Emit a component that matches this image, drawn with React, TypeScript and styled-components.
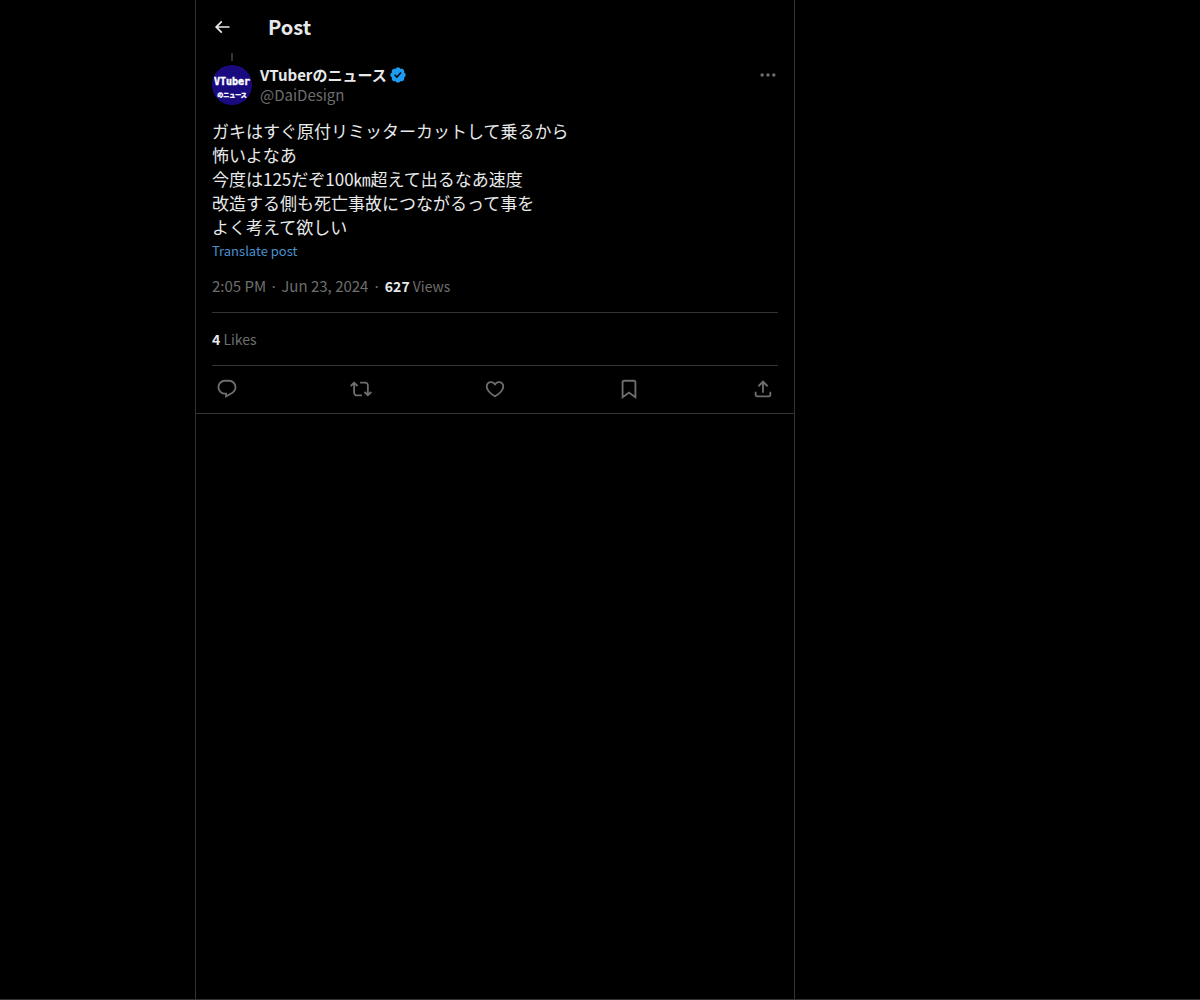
import React from "react";
import styled, { createGlobalStyle } from "styled-components";

const color = {
  text: "#e7e9ea",
  grey: "#6e6e6e",
  rule: "#333333",
  link: "#4a90d0",
  badge: "#1d9bf0",
};

const GlobalStyle = createGlobalStyle`
  *, *::before, *::after { box-sizing: border-box; }
  body {
    margin: 0;
    background: #000;
    color: ${color.text};
    font-family: "Noto Sans CJK JP", "Noto Sans", sans-serif;
    font-size: 15px;
    line-height: 20px;
  }
`;

const Page = styled.div`
  display: grid;
  grid-template-columns: minmax(0, 195px) minmax(0, 600px) 1fr;
  min-height: 100vh;
  border-bottom: 1px solid ${color.rule};
`;

const Column = styled.main`
  grid-column: 2;
  border: solid ${color.rule};
  border-width: 0 1px;
`;

const Header = styled.header`
  display: flex;
  align-items: center;
  gap: 36px;
  height: 53px;
  padding: 0 16px;
`;

const Title = styled.h1`
  margin: 0;
  font-size: 20px;
  line-height: 24px;
  font-weight: 700;
`;

const IconButton = styled.button<{ $tone?: string }>`
  display: flex;
  padding: 0;
  border: 0;
  background: none;
  color: ${(p) => p.$tone ?? color.grey};
  cursor: pointer;
`;

const Glyph = styled.svg<{ $size: number }>`
  display: block;
  flex: none;
  width: ${(p) => p.$size}px;
  height: ${(p) => p.$size}px;
  fill: currentColor;
`;

const Post = styled.article`
  border-bottom: 1px solid ${color.rule};
`;

const Inset = styled.div`
  padding: 0 16px;
`;

const ThreadLine = styled.div`
  width: 2px;
  height: 8px;
  margin: 0 19px 4px;
  background: ${color.rule};
`;

const Author = styled.div`
  display: flex;
  gap: 8px;
  margin-bottom: 14px;
`;

const AuthorNames = styled.div`
  flex: 1;
  min-width: 0;
`;

const NameRow = styled.div`
  display: flex;
  align-items: center;
  gap: 2px;
`;

const Name = styled.a`
  color: ${color.text};
  font-weight: 700;
  text-decoration: none;
`;

const Handle = styled.a`
  display: block;
  color: ${color.grey};
  text-decoration: none;
`;

const MoreWrap = styled.div`
  display: flex;
  align-items: center;
  height: 20px;
`;

const Avatar = styled.svg`
  display: block;
  width: 40px;
  height: 40px;
  border-radius: 50%;
`;

const Body = styled.p`
  margin: 0;
  font-size: 17px;
  line-height: 24px;
  white-space: pre-line;
`;

const Translate = styled.button`
  display: block;
  padding: 0;
  border: 0;
  background: none;
  color: ${color.link};
  font: inherit;
  font-size: 13px;
  line-height: 24px;
  cursor: pointer;
`;

const Meta = styled.div`
  display: flex;
  gap: 4px;
  padding: 13px 0 16px;
  color: ${color.grey};
`;

const Likes = styled.div`
  padding: 16px 0;
  border: solid ${color.rule};
  border-width: 1px 0;
`;

const Stat = styled.span`
  display: block;
  color: ${color.grey};
  font-size: 14px;
`;

const Count = styled.strong`
  color: ${color.text};
  font-weight: 700;
`;

const Actions = styled.div`
  display: flex;
  align-items: center;
  justify-content: space-between;
  height: 47px;
  padding: 0 4px 1px;
`;

const BACK = "M7.414 13l5.043 5.04-1.414 1.42L3.586 12l7.457-7.46 1.414 1.42L7.414 11H21v2H7.414z";
const MORE =
  "M3 12c0-1.1.9-2 2-2s2 .9 2 2-.9 2-2 2-2-.9-2-2zm9 2c1.1 0 2-.9 2-2s-.9-2-2-2-2 .9-2 2 .9 2 2 2zm7 0c1.1 0 2-.9 2-2s-.9-2-2-2-2 .9-2 2 .9 2 2 2z";
const BADGE =
  "M20.396 11c-.018-.646-.215-1.275-.57-1.816-.354-.54-.852-.972-1.438-1.246.223-.607.27-1.264.14-1.897-.131-.634-.437-1.218-.882-1.687-.47-.445-1.053-.75-1.687-.882-.633-.13-1.29-.083-1.897.14-.273-.587-.704-1.086-1.245-1.44S11.647 1.62 11 1.604c-.646.017-1.273.213-1.813.568s-.969.854-1.24 1.44c-.608-.223-1.267-.272-1.902-.14-.635.13-1.22.436-1.69.882-.445.47-.749 1.055-.878 1.688-.13.633-.08 1.29.144 1.896-.587.274-1.087.705-1.443 1.245-.356.54-.555 1.17-.574 1.817.02.647.218 1.276.574 1.817.356.54.856.972 1.443 1.245-.224.606-.274 1.263-.144 1.896.13.634.433 1.218.877 1.688.47.443 1.054.747 1.687.878.633.132 1.29.084 1.897-.136.274.586.705 1.084 1.246 1.439.54.354 1.17.551 1.816.569.647-.016 1.276-.213 1.817-.567s.972-.854 1.245-1.44c.604.239 1.266.296 1.903.164.636-.132 1.22-.447 1.68-.907.46-.46.776-1.044.908-1.681s.075-1.299-.165-1.903c.586-.274 1.084-.705 1.439-1.246.354-.54.551-1.17.569-1.816zM9.662 14.85l-3.429-3.428 1.293-1.302 2.072 2.072 4.4-4.794 1.347 1.246z";

const actions = [
  {
    label: "Reply",
    d: "M1.751 10c0-4.42 3.584-8 8.005-8h4.366c4.49 0 8.129 3.64 8.129 8.13 0 2.96-1.607 5.68-4.196 7.11l-8.054 4.46v-3.69h-.067c-4.49.1-8.183-3.51-8.183-8.01zm8.005-6c-3.317 0-6.005 2.69-6.005 6 0 3.37 2.77 6.08 6.138 6.01l.351-.01h1.761v2.3l5.087-2.81c1.951-1.08 3.163-3.13 3.163-5.36 0-3.39-2.744-6.13-6.129-6.13H9.756z",
  },
  {
    label: "Repost",
    d: "M4.5 3.88l4.432 4.14-1.364 1.46L5.5 7.55V16c0 1.1.896 2 2 2H13v2H7.5c-2.209 0-4-1.79-4-4V7.55L1.432 9.48.068 8.02 4.5 3.88zM16.5 6H11V4h5.5c2.209 0 4 1.79 4 4v8.45l2.068-1.93 1.364 1.46-4.432 4.14-4.432-4.14 1.364-1.46 2.068 1.93V8c0-1.1-.896-2-2-2z",
  },
  {
    label: "Like",
    d: "M16.697 5.5c-1.222-.06-2.679.51-3.89 2.16l-.805 1.09-.806-1.09C9.984 6.01 8.526 5.44 7.304 5.5c-1.243.07-2.349.78-2.91 1.91-.552 1.12-.633 2.78.479 4.82 1.074 1.97 3.257 4.27 7.129 6.61 3.87-2.34 6.052-4.64 7.126-6.61 1.111-2.04 1.03-3.7.477-4.82-.561-1.13-1.666-1.84-2.908-1.91zm4.187 7.69c-1.351 2.48-4.001 5.12-8.379 7.67l-.503.3-.504-.3c-4.379-2.55-7.029-5.19-8.382-7.67-1.36-2.5-1.41-4.86-.514-6.67.887-1.79 2.647-2.91 4.601-3.01 1.651-.09 3.368.56 4.798 2.01 1.429-1.45 3.146-2.1 4.796-2.01 1.954.1 3.714 1.22 4.601 3.01.896 1.81.846 4.17-.514 6.67z",
  },
  {
    label: "Bookmark",
    d: "M4 4.5C4 3.12 5.119 2 6.5 2h11C18.881 2 20 3.12 20 4.5v18.44l-8-5.71-8 5.71V4.5zM6.5 4c-.276 0-.5.22-.5.5v14.56l6-4.29 6 4.29V4.5c0-.28-.224-.5-.5-.5h-11z",
  },
  {
    label: "Share",
    d: "M12 2.59l5.7 5.7-1.41 1.42L13 6.41V16h-2V6.41l-3.3 3.3-1.41-1.42L12 2.59zM21 15l-.02 3.51c0 1.38-1.12 2.49-2.5 2.49H5.5C4.11 21 3 19.88 3 18.5V15h2v3.5c0 .28.22.5.5.5h12.98c.28 0 .5-.22.5-.5L19 15h2z",
  },
];

const postText = `ガキはすぐ原付リミッターカットして乗るから
怖いよなあ
今度は125だぞ100㎞超えて出るなあ速度
改造する側も死亡事故につながるって事を
よく考えて欲しい`;

function Icon({ d, size, box = 24 }: { d: string; size: number; box?: number }) {
  return (
    <Glyph $size={size} viewBox={`0 0 ${box} ${box}`} aria-hidden="true">
      <path d={d} />
    </Glyph>
  );
}

function ProfilePicture() {
  return (
    <Avatar viewBox="0 0 40 40" role="img" aria-label="VTuberのニュース">
      <rect width="40" height="40" fill="#1a0a80" />
      <g fill="#fff" stroke="#fff" strokeWidth="0.4" textAnchor="middle" fontWeight="700">
        <text x="20" y="20" fontSize="10" fontFamily="'DejaVu Sans Mono', monospace">
          VTuber
        </text>
        <text x="20" y="32" fontSize="6" fontFamily="'Noto Sans CJK JP', sans-serif">
          のニュース
        </text>
      </g>
    </Avatar>
  );
}

export default function App() {
  return (
    <>
      <GlobalStyle />
      <Page>
        <Column>
          <Header>
            <IconButton $tone={color.text} aria-label="Back">
              <Icon d={BACK} size={20} />
            </IconButton>
            <Title>Post</Title>
          </Header>
          <Post>
            <Inset>
              <ThreadLine />
              <Author>
                <ProfilePicture />
                <AuthorNames>
                  <NameRow>
                    <Name href="#profile">VTuberのニュース</Name>
                    <IconButton $tone={color.badge} aria-label="Verified account">
                      <Icon d={BADGE} size={18} box={22} />
                    </IconButton>
                  </NameRow>
                  <Handle href="#profile">@DaiDesign</Handle>
                </AuthorNames>
                <MoreWrap>
                  <IconButton aria-label="More">
                    <Icon d={MORE} size={20} />
                  </IconButton>
                </MoreWrap>
              </Author>
              <Body lang="ja">{postText}</Body>
              <Translate>Translate post</Translate>
              <Meta>
                <time dateTime="2024-06-23T14:05">2:05 PM · Jun 23, 2024</time>
                <span>·</span>
                <Stat>
                  <Count>627</Count> Views
                </Stat>
              </Meta>
              <Likes>
                <Stat>
                  <Count>4</Count> Likes
                </Stat>
              </Likes>
              <Actions>
                {actions.map((a) => (
                  <IconButton key={a.label} aria-label={a.label}>
                    <Icon d={a.d} size={22} />
                  </IconButton>
                ))}
              </Actions>
            </Inset>
          </Post>
        </Column>
      </Page>
    </>
  );
}
